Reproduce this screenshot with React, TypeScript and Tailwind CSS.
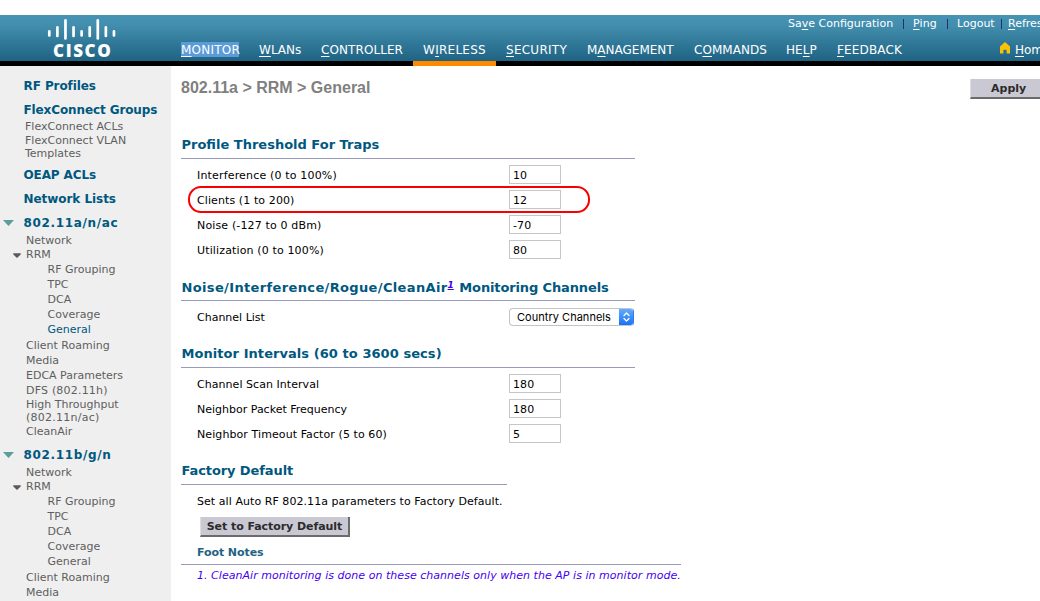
import React from 'react';

type SideKind = 'group' | 'item' | 'sub';

interface SideRow {
  text: string;
  kind: SideKind;
  gap: string;
  open?: boolean;
  active?: boolean;
  tracking?: string;
}

const radioRows: SideRow[] = [
  { text: 'Network', kind: 'item', gap: 'mt-[5px]' },
  { text: 'RRM', kind: 'item', gap: 'mt-0.5', open: true },
  { text: 'RF Grouping', kind: 'sub', gap: 'mt-[3px]' },
  { text: 'TPC', kind: 'sub', gap: 'mt-[3px]' },
  { text: 'DCA', kind: 'sub', gap: 'mt-[3px]' },
  { text: 'Coverage', kind: 'sub', gap: 'mt-[3px]' },
];

const sideRows: SideRow[] = [
  { text: 'RF Profiles', kind: 'group', gap: 'mt-[14px]', tracking: 'tracking-[-0.08px]' },
  { text: 'FlexConnect Groups', kind: 'group', gap: 'mt-3', tracking: 'tracking-[-0.11px]' },
  { text: 'FlexConnect ACLs', kind: 'item', gap: 'mt-1', tracking: '-ml-px' },
  { text: 'FlexConnect VLAN', kind: 'item', gap: 'mt-0.5', tracking: '-ml-px' },
  { text: 'Templates', kind: 'item', gap: 'mt-px', tracking: '-ml-px' },
  { text: 'OEAP ACLs', kind: 'group', gap: 'mt-[10px]', tracking: 'tracking-[-0.11px]' },
  { text: 'Network Lists', kind: 'group', gap: 'mt-3', tracking: 'tracking-[-0.05px]' },
  { text: '802.11a/n/ac', kind: 'group', gap: 'mt-3', open: true, tracking: 'tracking-[0.66px]' },
  ...radioRows,
  { text: 'General', kind: 'sub', gap: 'mt-[3px]', active: true },
  { text: 'Client Roaming', kind: 'item', gap: 'mt-1' },
  { text: 'Media', kind: 'item', gap: 'mt-[3px]' },
  { text: 'EDCA Parameters', kind: 'item', gap: 'mt-[3px]' },
  { text: 'DFS (802.11h)', kind: 'item', gap: 'mt-[3px]', tracking: 'tracking-[0.2px]' },
  { text: 'High Throughput', kind: 'item', gap: 'mt-0.5' },
  { text: '(802.11n/ac)', kind: 'item', gap: 'mt-px', tracking: 'tracking-[0.25px]' },
  { text: 'CleanAir', kind: 'item', gap: 'mt-0.5' },
  { text: '802.11b/g/n', kind: 'group', gap: 'mt-3', open: true, tracking: 'tracking-[0.66px]' },
  ...radioRows,
  { text: 'General', kind: 'sub', gap: 'mt-[3px]' },
  { text: 'Client Roaming', kind: 'item', gap: 'mt-1' },
  { text: 'Media', kind: 'item', gap: 'mt-[3px]' },
];

const kindStyle: Record<SideKind, string> = {
  group: 'text-xs leading-[12px] font-bold',
  item: 'pt-[2px] text-[11px] leading-[12px]',
  sub: 'pt-[2px] text-[11px] leading-[12px]',
};

const indent: Record<SideKind, string> = {
  group: 'w-[23.5px]',
  item: 'w-[26px]',
  sub: 'w-[47.5px]',
};

function SideLine({ row }: { row: SideRow }) {
  const color = row.kind === 'group' || row.active ? 'text-[#00587f]' : 'text-[#5e5e5e]';
  return (
    <div className={`flex h-3 shrink-0 items-center whitespace-nowrap ${row.gap}`}>
      <span className={`flex h-3 shrink-0 items-center ${indent[row.kind]}`}>
        {row.open && row.kind === 'group' && (
          <svg className="ml-[3px]" width="11" height="6" viewBox="0 0 11 6">
            <path d="M0 0H11L5.5 6Z" fill="#5a9d99" />
          </svg>
        )}
        {row.open && row.kind === 'item' && (
          <svg className="mt-[3px] ml-[12.5px]" width="8" height="5" viewBox="0 0 8 5">
            <path d="M0.3 0.3H7.7V1.6L4 5L0.3 1.6Z" fill="#5a5a5a" />
          </svg>
        )}
      </span>
      <span className={`${kindStyle[row.kind]} ${color} ${row.tracking ?? ''}`}>{row.text}</span>
    </div>
  );
}

/* Menu label with one access-key letter underlined. */
function Key({ pre = '', k, post }: { pre?: string; k: string; post: string }) {
  return (
    <>
      {pre}
      <span className="underline decoration-1 underline-offset-2">{k}</span>
      {post}
    </>
  );
}

function Logo() {
  const bars = [0, 1, 2, 1, 0, 1, 2, 1, 0];
  const top = [12, 8, 1];
  const end = [17.5, 18, 20.5];
  return (
    <div className="flex w-[181px] shrink-0 flex-col items-start pt-[3px] pl-[47px]">
      <svg width="70" height="22" viewBox="0 0 70 22">
        {bars.map((b, i) => (
          <line
            key={i}
            x1={2.3 + i * 8.08}
            x2={2.3 + i * 8.08}
            y1={top[b] + 1.4}
            y2={end[b]}
            stroke="#fff"
            strokeWidth="2.7"
            strokeLinecap="round"
          />
        ))}
      </svg>
      <span className="mt-[3px] ml-[6px] font-['Open_Sans'] text-[17px] leading-[16px] font-extrabold tracking-[1.6px] text-white">
        CISCO
      </span>
    </div>
  );
}

function Header() {
  return (
    <header className="mt-[15px] flex h-[51px] shrink-0 bg-[linear-gradient(to_bottom,#4793b4_0px,#438eae_10px,#1f6383_46px,#000_46px)] text-white">
      <Logo />
      <div className="flex w-[859px] flex-col overflow-hidden whitespace-nowrap">
        <div className="flex h-[18px] items-center pl-[607px] text-[11px] *:shrink-0">
          <span className="w-[115px]"><Key pre="Sa" k="v" post="e Configuration" /></span>
          <span className="mr-[9px] h-[10px] w-px bg-[#23306e]" />
          <span className="w-[34px] tracking-[0.1px]"><Key k="P" post="ing" /></span>
          <span className="mr-[9px] h-[10px] w-px bg-[#23306e]" />
          <span className="w-[44px]">Logout</span>
          <span className="mr-[6px] h-[10px] w-px bg-[#23306e]" />
          <span><Key k="R" post="efresh" /></span>
        </div>
        <nav className="mt-[7px] flex h-[26px] text-xs leading-[20px] *:shrink-0">
          <div className="w-[78px] tracking-[0.22px]">
            <span className="mt-[2px] block h-[15px] w-[58px] bg-[#5b9bd7] leading-[16px]"><Key k="M" post="ONITOR" /></span>
          </div>
          <span className="w-[62px]"><Key k="W" post="LANs" /></span>
          <span className="w-[92px] tracking-[0.08px]"><Key k="C" post="ONTROLLER" /></span>
          <div className="w-[83px] border-b-5 border-[#ff8a00] pl-[10px] tracking-[0.27px]"><Key pre="W" k="I" post="RELESS" /></div>
          <span className="w-[91px] pl-[10px] tracking-[0.26px]"><Key k="S" post="ECURITY" /></span>
          <span className="w-[107px]"><Key pre="M" k="A" post="NAGEMENT" /></span>
          <span className="w-[92px] tracking-[0.05px]"><Key pre="C" k="O" post="MMANDS" /></span>
          <span className="w-[51px] tracking-[0.1px]"><Key pre="HE" k="L" post="P" /></span>
          <span className="w-[163px] tracking-[0.15px]"><Key k="F" post="EEDBACK" /></span>
          <svg className="mt-[2px] mr-[5px]" width="10" height="12" viewBox="0 0 10 12">
            <path d="M5 0L10 4.5V11.5H6.6V7.8H3.4V11.5H0V4.5Z" fill="#fdc108" />
          </svg>
          <span><Key k="H" post="ome" /></span>
        </nav>
      </div>
    </header>
  );
}

function Heading({ className, children }: { className: string; children: React.ReactNode }) {
  return (
    <h2 className={`flex items-end border-b border-[#9a9abb] pl-[0.5px] text-[13px] leading-[16px] font-bold text-[#00587f] ${className}`}>
      {children}
    </h2>
  );
}

interface FieldProps {
  label: string;
  value: string;
  tracking?: string;
  marked?: boolean;
}

function Field({ label, value, tracking = '', marked }: FieldProps) {
  return (
    <label className="relative flex h-[25px] items-center pl-4 text-[11px] text-black">
      <span className={`w-[312px] pt-1 ${tracking}`}>{label}</span>
      <input
        readOnly
        value={value}
        className="h-[19px] w-[52px] border border-[#c6c6c6] bg-white pt-px pl-[3px] tracking-[0.1px] outline-none"
      />
      {marked && (
        <span className="pointer-events-none absolute -top-px left-[7px] h-[27px] w-[402px] rounded-[13px] border-2 border-[#f80000]" />
      )}
    </label>
  );
}

export default function App() {
  return (
    <div className="flex h-[601px] w-[1040px] flex-col overflow-hidden bg-white font-['DejaVu_Sans',sans-serif]">
      <Header />
      <div className="flex min-h-0 flex-1">
        <aside className="flex w-[171px] shrink-0 flex-col overflow-hidden bg-[#efefef]">
          {sideRows.map((row, i) => (
            <SideLine key={i} row={row} />
          ))}
        </aside>
        <main className="flex flex-1 flex-col overflow-hidden pl-[10px] whitespace-nowrap">
          <div className="flex h-16 shrink-0 items-start justify-between">
            <h1 className="pt-[11px] font-['Liberation_Sans',sans-serif] text-base leading-[21px] font-bold text-[#808080]">
              802.11a &gt; RRM &gt; General
            </h1>
            <button className="mt-[13px] h-5 w-[70px] border-b-2 border-l border-b-[#6b6b6b] border-l-[#dedee4] bg-[#c9c8d3] pt-px pl-[20px] text-left text-[11px] leading-[17px] font-bold text-[#2b2b2b]">
              Apply
            </button>
          </div>

          <Heading className="h-[29px] w-[454px] pb-[5px]">Profile Threshold For Traps</Heading>
          <div className="pt-[3px]">
            <Field label="Interference (0 to 100%)" value="10" tracking="tracking-[0.17px]" />
            <Field label="Clients (1 to 200)" value="12" tracking="tracking-[0.1px]" marked />
            <Field label="Noise (-127 to 0 dBm)" value="-70" tracking="tracking-[0.15px]" />
            <Field label="Utilization (0 to 100%)" value="80" tracking="tracking-[0.14px]" />
          </div>

          <Heading className="h-[39px] w-[454px] pb-1">
            <span className="tracking-[0.36px]">Noise/Interference/Rogue/CleanAir</span>
            <a className="mb-[5px] text-[9px] leading-[12px] italic text-[#4400e8] underline">1</a>
            <span className="ml-[5.5px] tracking-[-0.13px]">Monitoring Channels</span>
          </Heading>
          <div className="flex h-8 items-center pl-4 text-[11px] text-black">
            <span className="w-[312px] pt-[2px]">Channel List</span>
            <div className="flex h-[18px] w-[125px] overflow-hidden rounded-[4px] border border-[#c4c4c4] border-r-[#2b7df2] bg-white">
              <span className="flex-1 pl-[7px] font-['Inter',sans-serif] leading-[17px] tracking-[0.03px]">Country Channels</span>
              <span className="-my-px flex w-[14px] items-center justify-center bg-linear-to-b from-[#66aefa] to-[#116cf8]">
                <svg width="7" height="10" viewBox="0 0 7 10" fill="none" stroke="#fff" strokeWidth="1.3" strokeLinecap="round" strokeLinejoin="round">
                  <path d="M1 3.5L3.5 1L6 3.5M1 6.5L3.5 9L6 6.5" />
                </svg>
              </span>
            </div>
          </div>

          <Heading className="h-[35px] w-[454px] pb-[5px]">
            <span className="tracking-[0.06px]">Monitor Intervals (60 to 3600 secs)</span>
          </Heading>
          <div className="pt-[3px]">
            <Field label="Channel Scan Interval" value="180" tracking="tracking-[0.05px]" />
            <Field label="Neighbor Packet Frequency" value="180" />
            <Field label="Neighbor Timeout Factor (5 to 60)" value="5" tracking="tracking-[0.09px]" />
          </div>

          <Heading className="h-[39px] w-[326px] pb-[5px]">
            <span className="tracking-[-0.1px]">Factory Default</span>
          </Heading>
          <p className="h-8 pt-px pl-4 text-[11px] leading-[32px] tracking-[0.06px] text-black">
            Set all Auto RF 802.11a parameters to Factory Default.
          </p>
          <button className="ml-[19px] h-5 w-[150px] border-r-2 border-b-2 border-l border-r-[#6b6b6b] border-b-[#6b6b6b] border-l-[#dedee4] bg-[#c9c8d3] pt-px text-[11px] leading-[17px] font-bold tracking-[-0.06px] text-[#2b2b2b]">
            Set to Factory Default
          </button>
          <h3 className="flex h-7 w-[500px] items-end border-b border-[#9a9abb] pb-[3px] pl-4 text-[11px] leading-[16px] font-bold tracking-[-0.08px] text-[#1f6383]">
            Foot Notes
          </h3>
          <p className="pt-px pl-4 text-[11px] leading-[20px] tracking-[0.035px] text-[#4400f0] italic">
            1. CleanAir monitoring is done on these channels only when the AP is in monitor mode.
          </p>
        </main>
      </div>
    </div>
  );
}
